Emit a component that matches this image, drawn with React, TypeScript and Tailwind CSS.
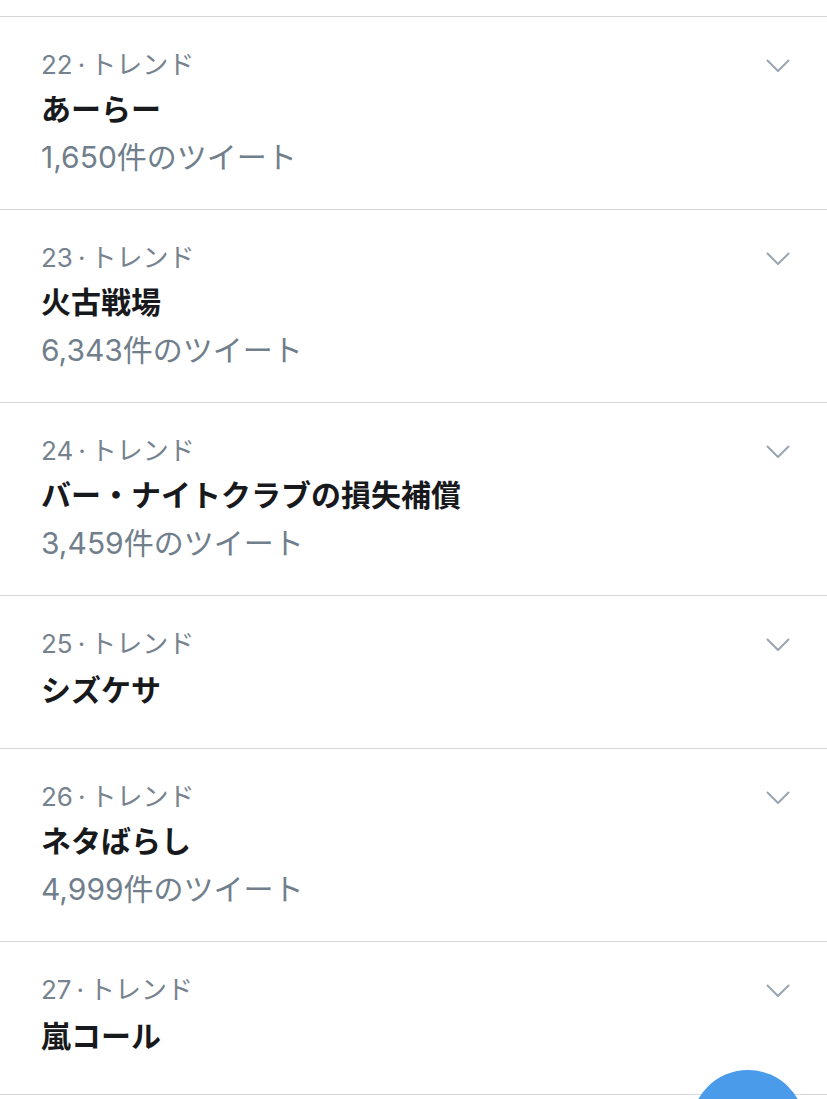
import React from "react";

type Trend = {
  rank: number;
  name: string;
  count?: string;
};

const trends: Trend[] = [
  { rank: 22, name: "あーらー", count: "1,650件のツイート" },
  { rank: 23, name: "火古戦場", count: "6,343件のツイート" },
  { rank: 24, name: "バー・ナイトクラブの損失補償", count: "3,459件のツイート" },
  { rank: 25, name: "シズケサ" },
  { rank: 26, name: "ネタばらし", count: "4,999件のツイート" },
  { rank: 27, name: "嵐コール" },
];

function Chevron() {
  return (
    <svg width="24" height="14" viewBox="0 0 24 14" fill="none" className="text-[#9aa5b1]">
      <path d="M1.5 1.5 L12 12 L22.5 1.5" stroke="currentColor" strokeWidth="2" strokeLinecap="round" strokeLinejoin="round" />
    </svg>
  );
}

function TrendRow({ trend }: { trend: Trend }) {
  return (
    <div
      className={
        "relative border-t border-[#d4d6d9] pl-[41px] pr-[36px] pt-[31px] " +
        (trend.count ? "pb-[30px]" : "pb-[36px]")
      }
    >
      <div className="text-[26px] leading-[34px] text-[#76838f]">
        {trend.rank}
        <span className="mx-[5px]">·</span>
        トレンド
      </div>
      <div
        className={
          "text-[30px] leading-[44px] font-bold text-[#17191c] " +
          (trend.count ? "mt-[5px]" : "mt-[7px]")
        }
      >
        {trend.name}
      </div>
      {trend.count && (
        <div className="mt-[4px] text-[30px] leading-[44px] text-[#717f8c]">{trend.count}</div>
      )}
      <div className="absolute right-[37px] top-[42px]">
        <Chevron />
      </div>
    </div>
  );
}

export default function App() {
  return (
    <div
      className="relative h-[1099px] w-[827px] overflow-hidden bg-white"
      style={{ fontFamily: '"Inter", "Noto Sans CJK JP", sans-serif' }}
    >
      <div className="h-[16px]" />
      {trends.map((t) => (
        <TrendRow key={t.rank} trend={t} />
      ))}
      <div className="border-t border-[#d4d6d9] h-[200px]" />
      <div className="absolute left-[691px] top-[1070px] h-[114px] w-[114px] rounded-full bg-[#4a9be9]" />
    </div>
  );
}
